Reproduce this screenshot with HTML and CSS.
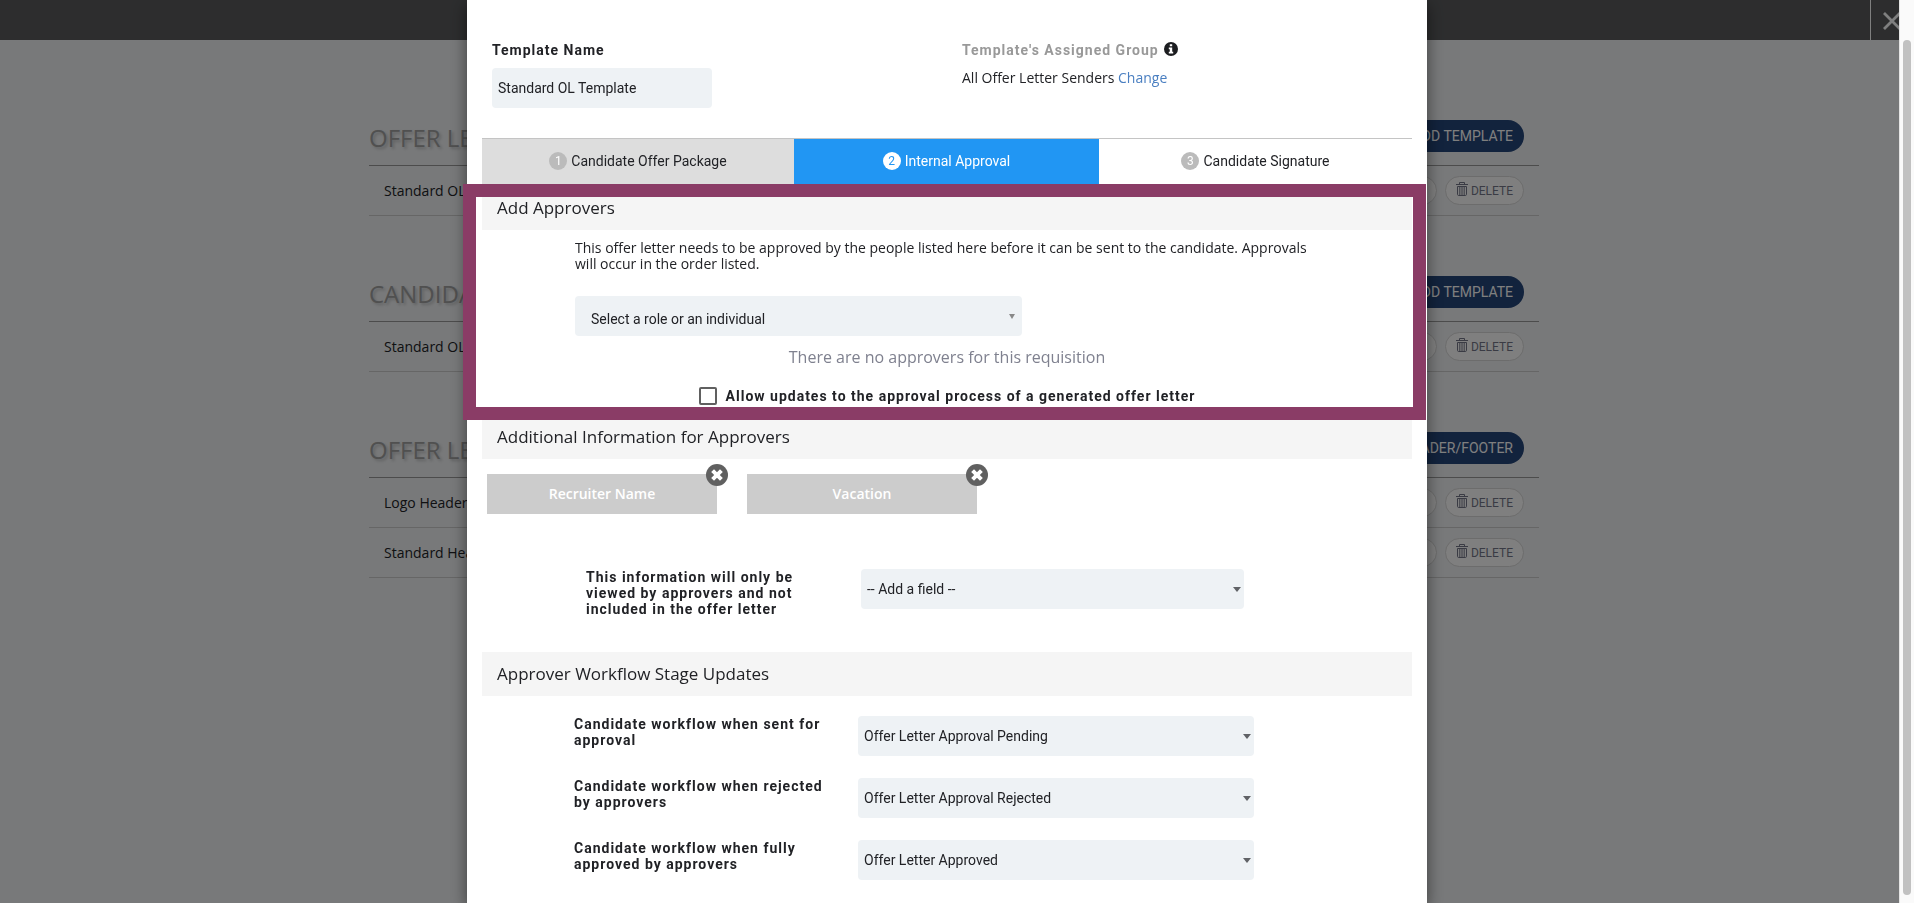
FILE: index.html
```html
<!DOCTYPE html>
<html lang="en">
<head>
    <meta charset="UTF-8">
    <meta name="viewport" content="width=device-width, initial-scale=1.0">
    <title>Offer Letter Templates</title>
    <link rel="stylesheet" href="styles.css">
</head>
<body>
    <svg class="sprite" aria-hidden="true">
        <symbol id="icon-trash" viewBox="0 0 12 14">
            <path d="M0 2.5h12M3.5 2.5v-2h5v2M1.5 4.5h9v7.8q0 1.2-1.2 1.2h-6.6q-1.2 0-1.2-1.2zM3.8 5v8M6 5v8M8.2 5v8" fill="none" stroke="currentColor"/>
        </symbol>
        <symbol id="icon-remove" viewBox="0 0 22 22">
            <circle cx="11" cy="11" r="11" fill="#606060"/>
            <path d="M6.6 6.6l8.8 8.8M15.4 6.6l-8.8 8.8" stroke="#fff" stroke-width="4"/>
        </symbol>
    </svg>

    <!-- Page behind the modal -->
    <div class="page">
        <header class="topbar">
            <button class="topbar-close" aria-label="Close">
                <svg width="18" height="18" viewBox="0 0 18 18"><path d="M1 1l16 16M17 1L1 17" stroke="#fff" stroke-width="2.8"/></svg>
            </button>
        </header>

        <main class="page-body">
            <section class="group">
                <div class="group-head">
                    <h2>OFFER LETTERS</h2>
                    <button class="btn-add">ADD TEMPLATE</button>
                </div>
                <div class="group-row">
                    <span>Standard OL</span>
                    <div class="row-actions">
                        <button class="btn-small">EDIT</button>
                        <button class="btn-small"><svg width="12" height="14"><use href="#icon-trash"/></svg>DELETE</button>
                    </div>
                </div>
            </section>

            <section class="group">
                <div class="group-head">
                    <h2>CANDIDATE</h2>
                    <button class="btn-add">ADD TEMPLATE</button>
                </div>
                <div class="group-row">
                    <span>Standard OL</span>
                    <div class="row-actions">
                        <button class="btn-small">EDIT</button>
                        <button class="btn-small"><svg width="12" height="14"><use href="#icon-trash"/></svg>DELETE</button>
                    </div>
                </div>
            </section>

            <section class="group">
                <div class="group-head">
                    <h2>OFFER LETTER</h2>
                    <button class="btn-add">HEADER/FOOTER</button>
                </div>
                <div class="group-row">
                    <span>Logo Header</span>
                    <div class="row-actions">
                        <button class="btn-small">EDIT</button>
                        <button class="btn-small"><svg width="12" height="14"><use href="#icon-trash"/></svg>DELETE</button>
                    </div>
                </div>
                <div class="group-row">
                    <span>Standard Header</span>
                    <div class="row-actions">
                        <button class="btn-small">EDIT</button>
                        <button class="btn-small"><svg width="12" height="14"><use href="#icon-trash"/></svg>DELETE</button>
                    </div>
                </div>
            </section>
        </main>
    </div>

    <!-- Template modal -->
    <div class="overlay">
        <div class="modal" role="dialog" aria-label="Template">
            <div class="template-info">
                <div class="template-name">
                    <label class="label" for="template-name">Template Name</label>
                    <input class="field" type="text" id="template-name" value="Standard OL Template">
                </div>
                <div class="template-group">
                    <div class="group-title">
                        <span class="label muted">Template's Assigned Group</span>
                        <svg width="14" height="14" viewBox="0 0 14 14"><circle cx="7" cy="7" r="7" fill="#1c1d20"/><path d="M5.8 2.3h2.4v2H5.8zM4.8 5.5h3.4v4.3h1v1.7H4.8V9.8h1V7.2h-1z" fill="#fff"/></svg>
                    </div>
                    <p>All Offer Letter Senders <a href="#">Change</a></p>
                </div>
            </div>

            <nav class="tabs">
                <button class="tab done"><span class="tab-num">1</span>Candidate Offer Package</button>
                <button class="tab active"><span class="tab-num">2</span>Internal Approval</button>
                <button class="tab"><span class="tab-num">3</span>Candidate Signature</button>
            </nav>

            <section class="approvers">
                <h3 class="section-title">Add Approvers</h3>
                <div class="approvers-body">
                    <p>This offer letter needs to be approved by the people listed here before it can be sent to the candidate. Approvals will occur in the order listed.</p>
                    <div class="select role-select">
                        <select class="field" aria-label="Approver">
                            <option>Select a role or an individual</option>
                        </select>
                    </div>
                </div>
                <p class="empty">There are no approvers for this requisition</p>
                <div class="check">
                    <input type="checkbox" id="allow-updates">
                    <label class="label" for="allow-updates">Allow updates to the approval process of a generated offer letter</label>
                </div>
                <div class="highlight"></div>
            </section>

            <section class="extra-info">
                <h3 class="section-title">Additional Information for Approvers</h3>
                <div class="chips">
                    <div class="chip">Recruiter Name
                        <button class="chip-remove" aria-label="Remove Recruiter Name"><svg width="22" height="22"><use href="#icon-remove"/></svg></button>
                    </div>
                    <div class="chip">Vacation
                        <button class="chip-remove" aria-label="Remove Vacation"><svg width="22" height="22"><use href="#icon-remove"/></svg></button>
                    </div>
                </div>
                <div class="add-field">
                    <label class="label" for="add-field">This information will only be viewed by approvers and not included in the offer letter</label>
                    <div class="select">
                        <select class="field" id="add-field">
                            <option>-- Add a field --</option>
                        </select>
                    </div>
                </div>
            </section>

            <section>
                <h3 class="section-title">Approver Workflow Stage Updates</h3>
                <div class="workflow">
                    <div class="workflow-row">
                        <label class="label" for="wf-sent">Candidate workflow when sent for approval</label>
                        <div class="select">
                            <select class="field" id="wf-sent"><option>Offer Letter Approval Pending</option></select>
                        </div>
                    </div>
                    <div class="workflow-row">
                        <label class="label" for="wf-rejected">Candidate workflow when rejected by approvers</label>
                        <div class="select">
                            <select class="field" id="wf-rejected"><option>Offer Letter Approval Rejected</option></select>
                        </div>
                    </div>
                    <div class="workflow-row">
                        <label class="label" for="wf-approved">Candidate workflow when fully approved by approvers</label>
                        <div class="select">
                            <select class="field" id="wf-approved"><option>Offer Letter Approved</option></select>
                        </div>
                    </div>
                </div>
            </section>
        </div>
    </div>

    <div class="scrollbar"><div class="scrollbar-thumb"></div></div>
</body>
</html>
```

FILE: styles.css
```css
/* Base Styles */
* {
    box-sizing: border-box;
    margin: 0;
    padding: 0;
}

body {
    height: 100vh;
    overflow: hidden;
    font-family: 'Open Sans', sans-serif;
    font-size: 14px;
    line-height: 16px;
    color: #212226;
    background: #f0f2f4;
}

button,
input,
select {
    font-family: Roboto, sans-serif;
    font-size: 14px;
    color: inherit;
    border: none;
}

button {
    cursor: pointer;
}

.sprite {
    display: none;
}

/* Background page */
.topbar {
    display: flex;
    justify-content: flex-end;
    height: 40px;
    background: #5a5b5d;
}

.topbar-close {
    display: flex;
    align-items: center;
    width: 44px;
    padding: 2px 0 0 12px;
    background: none;
    border-left: 1px solid #fff;
}

.page-body {
    max-width: 1176px;
    margin: 0 auto;
    padding: 71px 6px 0 0;
}

.group {
    margin-bottom: 51px;
}

.group-head {
    display: flex;
    align-items: center;
    justify-content: space-between;
    height: 55px;
    padding: 0 15px 4px 0;
    border-bottom: 1px solid #999;
}

.group-head h2 {
    padding-top: 4px;
    font-size: 24px;
    font-weight: 400;
    line-height: 32px;
    color: #a0a0a0;
    text-shadow: 2px 2px 3px rgba(0, 0, 0, 0.2);
}

.btn-add {
    height: 32px;
    padding: 0 11px;
    color: #fff;
    background: #24467a;
    border-radius: 16px;
}

.group-row {
    display: flex;
    align-items: center;
    justify-content: space-between;
    height: 50px;
    padding: 0 15px;
    border-bottom: 1px solid #ccc;
}

.row-actions {
    display: flex;
    gap: 8px;
}

.btn-small {
    display: flex;
    align-items: center;
    gap: 3px;
    height: 29px;
    padding: 0 10px;
    font-size: 12px;
    color: #747788;
    background: #fff;
    border: 1px solid #d8d8d8;
    border-radius: 15px;
}

.btn-small svg {
    margin-bottom: 3px;
}

/* Modal */
.overlay {
    position: fixed;
    inset: 0;
    padding: 0 20px 0 0;
    overflow: hidden;
    background: rgba(0, 0, 0, 0.5);
}

.modal {
    max-width: 960px;
    min-height: 100vh;
    margin: 0 auto;
    padding: 0 15px;
    background: #fff;
    box-shadow: 0 5px 15px rgba(0, 0, 0, 0.5);
}

.label {
    font-family: Roboto, sans-serif;
    font-weight: 700;
    letter-spacing: 1px;
}

.muted {
    color: #999;
}

.field {
    width: 100%;
    height: 40px;
    padding: 0 6px;
    background: #eef2f5;
    border-radius: 4px;
    appearance: none;
}

.select {
    position: relative;
}

.select::after {
    content: "";
    position: absolute;
    top: 18px;
    right: 3px;
    border: 4px solid transparent;
    border-top: 5px solid #606266;
    border-bottom: 0;
    pointer-events: none;
}

.template-info {
    display: grid;
    grid-template-columns: 1fr 1fr;
    padding: 42px 10px 0;
    height: 138px;
}

.template-name {
    display: flex;
    flex-direction: column;
    gap: 10px;
    max-width: 220px;
}

.template-group {
    padding-left: 15px;
}

.group-title {
    display: flex;
    gap: 5px;
    margin-bottom: 12px;
}

a {
    color: #4a7fc1;
    text-decoration: none;
}

/* Tabs */
.tabs {
    display: grid;
    grid-template-columns: 312fr 305fr 313fr;
    height: 48px;
    border-top: 1px solid #c4c4c4;
}

.tab {
    display: flex;
    align-items: center;
    justify-content: center;
    gap: 4px;
    padding-bottom: 3px;
    background: #fff;
}

.tab.done {
    background: #ddd;
}

.tab.active {
    color: #fff;
    background: #2196f3;
}

.tab-num {
    width: 18px;
    height: 18px;
    font-size: 12px;
    line-height: 18px;
    color: #fff;
    background: #bbb;
    border-radius: 50%;
}

.tab.active .tab-num {
    color: #2196f3;
    background: #fff;
}

/* Sections */
.section-title {
    height: 44px;
    padding: 0 15px;
    font-size: 17px;
    font-weight: 400;
    line-height: 44px;
    background: #f5f5f5;
}

.approvers {
    position: relative;
    height: 229px;
}

.approvers-body {
    padding: 10px 93px 0;
}

.role-select {
    max-width: 447px;
    margin-top: 24px;
}

.role-select .field {
    padding: 6px 16px 0;
}

.role-select::after {
    right: 7px;
    border-width: 5px 3px 0;
    border-top-color: #888;
}

.empty {
    margin-top: 13px;
    font-size: 16px;
    text-align: center;
    color: #7f818f;
}

.check {
    display: flex;
    align-items: center;
    justify-content: center;
    gap: 9px;
    margin-top: 22px;
}

.check input {
    width: 18px;
    height: 18px;
    border: 2px solid #606060;
    border-radius: 2px;
    appearance: none;
}

/* Callout frame around the approvers block */
.highlight {
    position: absolute;
    inset: -2px -14px -5px -19px;
    border: 13px solid #8a3c66;
    pointer-events: none;
}

.chips {
    display: flex;
    gap: 30px;
    padding: 15px 5px 0;
}

.chip {
    position: relative;
    width: 230px;
    font-weight: 600;
    line-height: 40px;
    text-align: center;
    color: #fff;
    background: #ccc;
}

.chip-remove {
    position: absolute;
    top: -10px;
    right: -11px;
    width: 22px;
    height: 22px;
    background: none;
}

.chip-remove svg {
    display: block;
}

.add-field {
    display: grid;
    grid-template-columns: 230px 383px;
    column-gap: 45px;
    padding: 55px 0 35px 104px;
}

.workflow {
    display: grid;
    gap: 22px;
    padding: 20px 0 20px 92px;
}

.workflow-row {
    display: grid;
    grid-template-columns: 264px 396px;
    column-gap: 20px;
}

/* Scrollbar */
.scrollbar {
    position: fixed;
    top: 0;
    right: 0;
    bottom: 0;
    width: 15px;
    padding: 40px 3px 8px;
    background: #fafafa;
    border-left: 1px solid #e4e4e4;
}

.scrollbar-thumb {
    width: 8px;
    height: 100%;
    background: #c1c1c1;
    border-radius: 4px;
}
```
